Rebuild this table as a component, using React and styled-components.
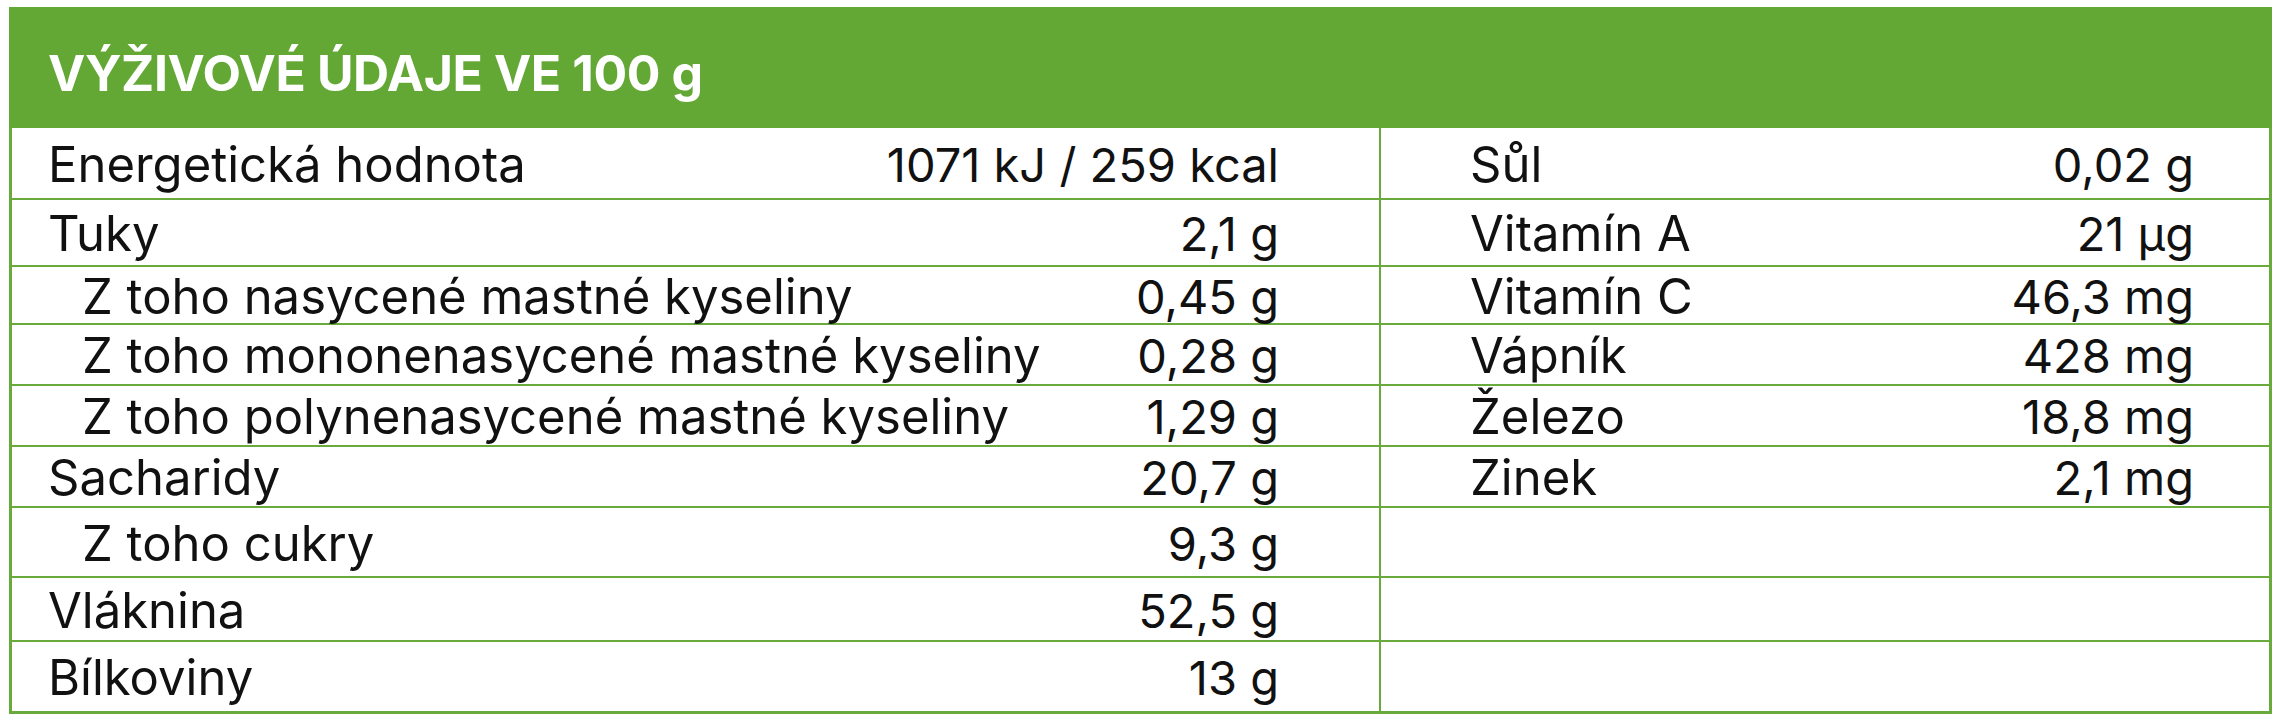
import React from "react";
import styled, { createGlobalStyle } from "styled-components";

const GREEN = "#63a734";
const LINE = "#68aa3b";

const Global = createGlobalStyle`
  html, body { margin: 0; padding: 0; background: #ffffff; }
  body { font-family: "Inter", "Liberation Sans", sans-serif; color: #111111; }
`;

const Wrapper = styled.section`
  width: 2263px;
  padding: 7px 0 0 9px;
`;

const Header = styled.h2`
  margin: 0;
  height: 121px;
  box-sizing: border-box;
  display: flex;
  align-items: center;
  padding: 10px 0 0 39px;
  background: ${GREEN};
  color: #ffffff;
  font-family: "Inter", "Liberation Sans", sans-serif;
  font-weight: 700;
  font-size: 50px;
  letter-spacing: -0.4px;
`;

const Table = styled.div`
  display: grid;
  grid-template-columns: 1369px 1fr;
  grid-template-rows: 72px 67px 58px 61px 61px 61px 70px 64px 69px;
  border: 3px solid ${LINE};
  border-top: none;
`;

const Cell = styled.div`
  box-sizing: border-box;
  display: flex;
  align-items: center;
  justify-content: space-between;
  border-bottom: ${(p) => (p.$last ? "none" : `2px solid ${LINE}`)};
  border-right: ${(p) => (p.$side === "left" ? `2px solid ${LINE}` : "none")};
  padding-left: ${(p) => (p.$side === "left" ? "36px" : "89px")};
  padding-right: ${(p) => (p.$side === "left" ? "100px" : "75px")};
  padding-top: 2px;
  line-height: 1;
  white-space: nowrap;
`;

const Label = styled.span`
  font-size: 49px;
  padding-left: ${(p) => (p.$indent ? "34px" : "0")};
`;

const Value = styled.span`
  font-size: 47px;
  text-align: right;
`;

const left = [
  ["Energetická hodnota", "1071 kJ / 259 kcal"],
  ["Tuky", "2,1 g"],
  ["Z toho nasycené mastné kyseliny", "0,45 g", true],
  ["Z toho mononenasycené mastné kyseliny", "0,28 g", true],
  ["Z toho polynenasycené mastné kyseliny", "1,29 g", true],
  ["Sacharidy", "20,7 g"],
  ["Z toho cukry", "9,3 g", true],
  ["Vláknina", "52,5 g"],
  ["Bílkoviny", "13 g"],
];

const right = [
  ["Sůl", "0,02 g"],
  ["Vitamín A", "21 µg"],
  ["Vitamín C", "46,3 mg"],
  ["Vápník", "428 mg"],
  ["Železo", "18,8 mg"],
  ["Zinek", "2,1 mg"],
  ["", ""],
  ["", ""],
  ["", ""],
];

export default function App() {
  return (
    <>
      <Global />
      <Wrapper>
        <Header>VÝŽIVOVÉ ÚDAJE VE 100 g</Header>
        <Table>
          {left.map((l, i) => {
            const r = right[i];
            const last = i === left.length - 1;
            return (
              <React.Fragment key={i}>
                <Cell $side="left" $last={last}>
                  <Label $indent={l[2]}>{l[0]}</Label>
                  <Value>{l[1]}</Value>
                </Cell>
                <Cell $side="right" $last={last}>
                  <Label>{r[0]}</Label>
                  <Value>{r[1]}</Value>
                </Cell>
              </React.Fragment>
            );
          })}
        </Table>
      </Wrapper>
    </>
  );
}
